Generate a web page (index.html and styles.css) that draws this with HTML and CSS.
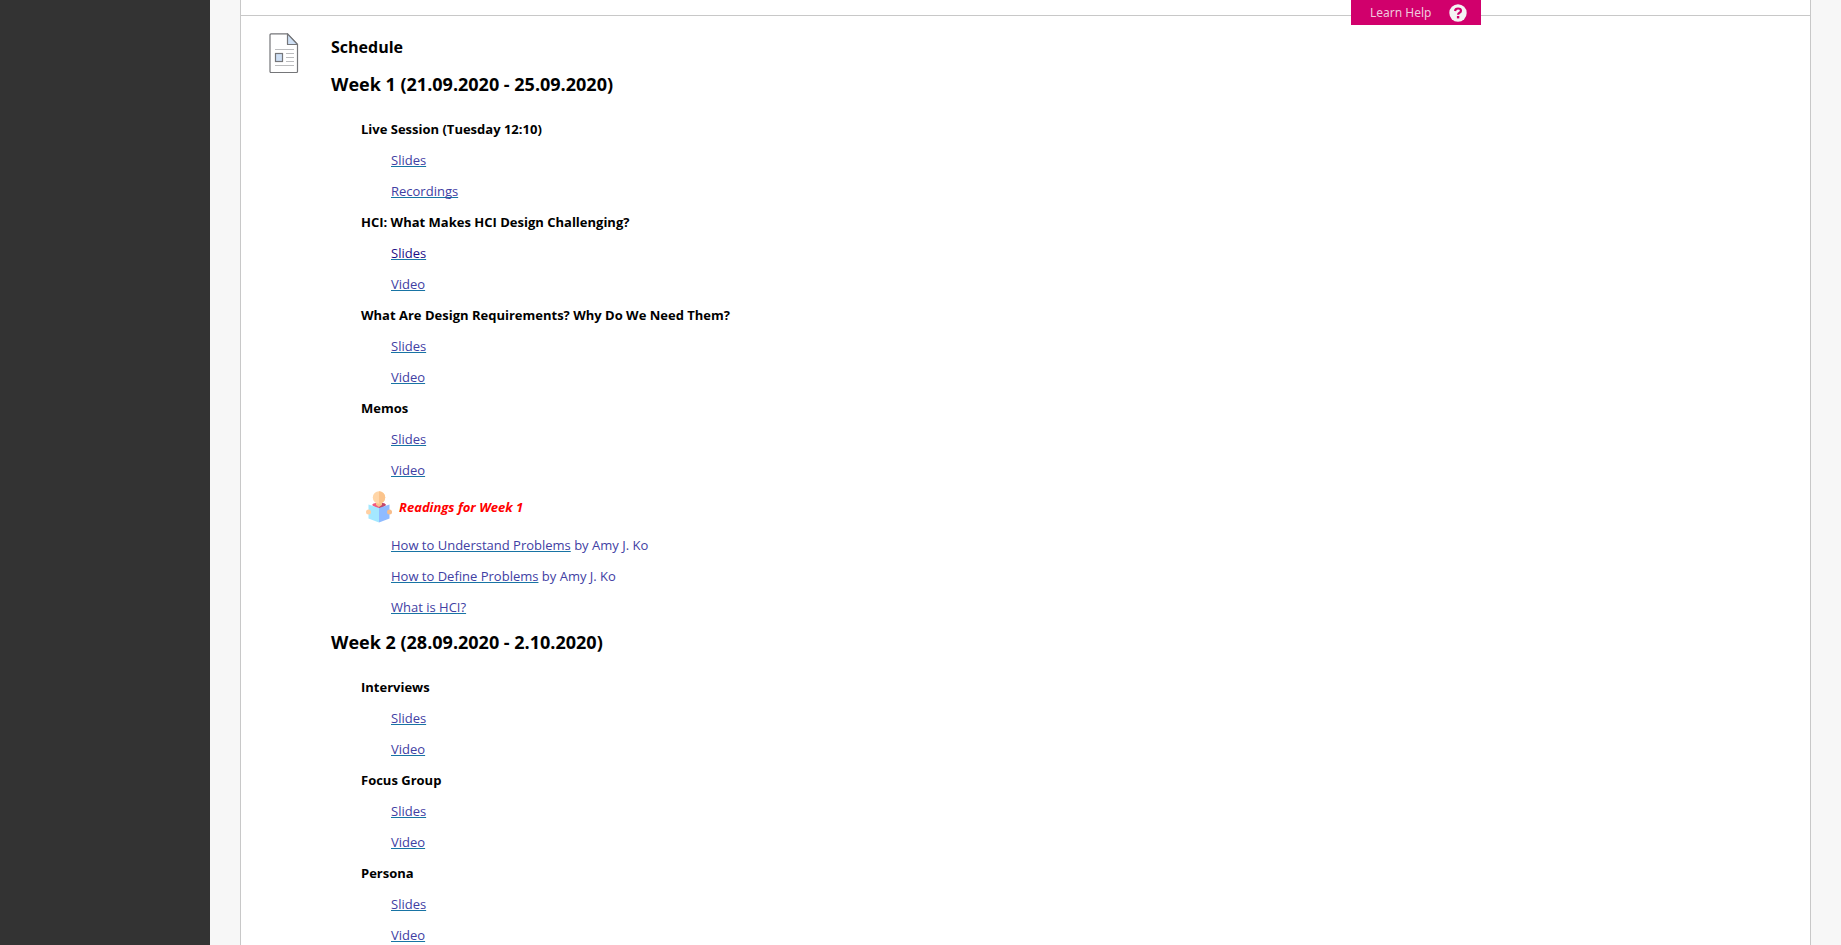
FILE: index.html
```html
<!DOCTYPE html>
<html lang="en">
<head>
<meta charset="utf-8">
<title>Schedule</title>
<link rel="stylesheet" href="styles.css">
</head>
<body>
<div class="layout">
  <aside class="sidebar" aria-label="Course menu"></aside>
  <div class="content">
    <main class="panel">
      <article class="item">
        <svg class="item-icon" width="30" height="41" viewBox="0 0 30 41" aria-hidden="true">
          <path d="M2 .9H18.5L28.5 11.5V38.5a1 1 0 0 1-1 1H2a1 1 0 0 1-1-1V1.9a1 1 0 0 1 1-1Z" fill="#fff" stroke="#757679" stroke-width="1.2"/>
          <path d="M18.5.9V11.5H28.5Z" fill="#cfe0f5" stroke="#757679" stroke-width="1.2" stroke-linejoin="round"/>
          <path d="M6 16.5H25M17 20.5H25M17 24.5H25M17 28.5H25M6 32.500H25" stroke="#bbbcbe"/>
          <rect x="6.500" y="20.500" width="7" height="8" fill="#cfe0f5" stroke="#757679" stroke-width="1.2"/>
        </svg>
        <div class="item-body">
          <h1 class="item-title">Schedule</h1>

          <h2 class="week">Week 1 (21.09.2020 - 25.09.2020)</h2>
          <div class="topics">
            <h3 class="topic">Live Session (Tuesday 12:10)</h3>
            <ul class="links">
              <li><a href="#">Slides</a></li>
              <li><a href="#">Recordings</a></li>
            </ul>
            <h3 class="topic">HCI: What Makes HCI Design Challenging?</h3>
            <ul class="links">
              <li><a class="dark" href="#">Slides</a></li>
              <li><a href="#">Video</a></li>
            </ul>
            <h3 class="topic">What Are Design Requirements? Why Do We Need Them?</h3>
            <ul class="links">
              <li><a href="#">Slides</a></li>
              <li><a href="#">Video</a></li>
            </ul>
            <h3 class="topic">Memos</h3>
            <ul class="links">
              <li><a href="#">Slides</a></li>
              <li><a href="#">Video</a></li>
            </ul>
            <h3 class="readings">
              <svg width="28" height="32" viewBox="0 0 28 32" aria-hidden="true">
                <path d="M7 14Q8 12 11 12H17Q20 12 21 14L14 19Z" fill="#f2587f"/>
                <path d="M14 12H17Q20 12 21 14L14 19Z" fill="#c0486e"/>
                <path d="M11 11H17V14L14 16L11 14Z" fill="#fbc08a"/>
                <path d="M3.500 13.500L14 17V31.500L3.500 27.500Z" fill="#a4e8ff"/>
                <path d="M24.500 13.500L14 17V31.500L24.500 27.500Z" fill="#8fbbff"/>
                <circle cx="14" cy="6.500" r="6.200" fill="#ffd6a8"/>
                <path d="M14 .3A6.200 6.200 0 0 1 14 12.700Z" fill="#fbc48c"/>
                <circle cx="3.500" cy="21" r="2.500" fill="#ffd0a3"/>
                <circle cx="24.500" cy="21" r="2.500" fill="#f7bd8b"/>
              </svg>
              <span>Readings for Week 1</span>
            </h3>
            <ul class="links">
              <li><a href="#">How to Understand Problems</a> by Amy J. Ko</li>
              <li><a href="#">How to Define Problems</a> by Amy J. Ko</li>
              <li><a href="#">What is HCI?</a></li>
            </ul>
          </div>

          <h2 class="week">Week 2 (28.09.2020 - 2.10.2020)</h2>
          <div class="topics">
            <h3 class="topic">Interviews</h3>
            <ul class="links">
              <li><a href="#">Slides</a></li>
              <li><a href="#">Video</a></li>
            </ul>
            <h3 class="topic">Focus Group</h3>
            <ul class="links">
              <li><a href="#">Slides</a></li>
              <li><a href="#">Video</a></li>
            </ul>
            <h3 class="topic">Persona</h3>
            <ul class="links">
              <li><a href="#">Slides</a></li>
              <li><a href="#">Video</a></li>
            </ul>
          </div>
        </div>
      </article>
    </main>
  </div>
</div>
<button class="help" type="button">
  <span>Learn Help</span>
  <svg width="18" height="18" viewBox="0 0 18 18" aria-hidden="true">
    <circle cx="9" cy="9" r="8.700" fill="#f4f4f4"/>
    <path d="M6 7Q6.300 4.500 9 4.500Q12 4.500 12 6.800Q12 8.100 10.500 8.800Q9.100 9.500 9.100 10.800" fill="none" stroke="#d1006c" stroke-width="2.200"/>
    <rect x="7.900" y="12" width="2.400" height="2.400" fill="#d1006c"/>
  </svg>
</button>
</body>
</html>
```
FILE: styles.css
```css
* {
  box-sizing: border-box;
}

body {
  margin: 0;
  background: #f7f7f7;
  color: #000;
  font: 13px/31px "Open Sans", "Noto Sans", sans-serif;
}

h1, h2, h3, ul {
  margin: 0;
  padding: 0;
}

.layout {
  display: flex;
  height: 100vh;
  overflow: hidden;
}

.sidebar {
  flex: 0 0 210px;
  background: #333;
}

.content {
  flex: 1;
  display: flex;
  padding: 0 30px;
}

.panel {
  flex: 1;
  padding-top: 15px;
  background: #fff;
  border: solid #c8c8c8;
  border-width: 0 1px;
}

.item {
  display: flex;
  align-items: flex-start;
  gap: 32px;
  padding: 17px 28px 0;
  border-top: 1px solid #c8c8c8;
}

.item-icon {
  flex: none;
}

.item-body {
  flex: 1;
}

.item-title {
  padding-bottom: 3px;
  font-size: 16px;
  line-height: 29px;
}

.week {
  padding: 6px 0 16px;
  font-size: 18px;
  line-height: 27px;
}

.topics {
  padding-left: 30px;
}

.topic {
  font-size: 13px;
}

.links {
  padding-left: 30px;
  list-style: none;
  color: #4140a3;
}

.links a {
  color: inherit;
  text-decoration: underline 1px #1874a4;
  text-decoration-skip-ink: none;
  text-underline-offset: 1px;
}

.links .dark {
  color: #1c0d87;
}

.readings {
  display: flex;
  align-items: center;
  gap: 6px;
  height: 44px;
  padding: 0 0 2px 4px;
  color: #f00;
  font-size: 13px;
  font-style: italic;
}

.help {
  position: absolute;
  top: 0;
  right: 360px;
  display: flex;
  align-items: center;
  justify-content: space-between;
  width: 130px;
  height: 25px;
  padding: 0 14px 0 19px;
  border: 0;
  background: #d1006c;
  color: #f0c8dc;
  font: 12px/18px "Noto Sans", sans-serif;
}
```
